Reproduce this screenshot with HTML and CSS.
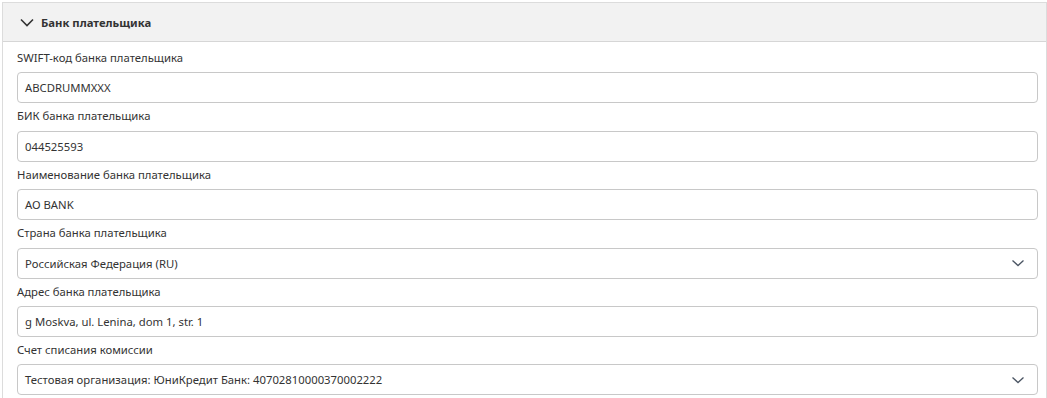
FILE: index.html
```
<!DOCTYPE html>
<html>
  <head>
    <meta charset="utf-8">
    <link rel="stylesheet" href="styles.css">
  </head>
  <body>
    <div class="panel">
      <div class="panel-head">
        <svg class="head-arrow" width="14" height="14" viewBox="0 0 14 14">
          <path d="M1 4.5 L7 10.5 L13 4.5" fill="none" stroke="#333" stroke-width="1.6"/>
        </svg>
        <span class="panel-title">Банк плательщика</span>
      </div>
      <div class="panel-body">
        <div class="field">
          <div class="field-label">SWIFT-код банка плательщика</div>
          <div class="control">ABCDRUMMXXX</div>
        </div>
        <div class="field">
          <div class="field-label">БИК банка плательщика</div>
          <div class="control">044525593</div>
        </div>
        <div class="field">
          <div class="field-label">Наименование банка плательщика</div>
          <div class="control">АО BANK</div>
        </div>
        <div class="field">
          <div class="field-label">Страна банка плательщика</div>
          <div class="control select">
            <span>Российская Федерация (RU)</span>
            <svg class="select-arrow" width="14" height="10" viewBox="0 0 14 10">
              <path d="M1.5 2.5 L7 7.5 L12.5 2.5" fill="none" stroke="#4b5563" stroke-width="1.3"/>
            </svg>
          </div>
        </div>
        <div class="field">
          <div class="field-label">Адрес банка плательщика</div>
          <div class="control">g Moskva, ul. Lenina, dom 1, str. 1</div>
        </div>
        <div class="field">
          <div class="field-label">Счет списания комиссии</div>
          <div class="control select">
            <span>Тестовая организация: ЮниКредит Банк: 40702810000370002222</span>
            <svg class="select-arrow" width="14" height="10" viewBox="0 0 14 10">
              <path d="M1.5 2.5 L7 7.5 L12.5 2.5" fill="none" stroke="#4b5563" stroke-width="1.3"/>
            </svg>
          </div>
        </div>
      </div>
    </div>
  </body>
</html>
```
FILE: styles.css
```
body {
  margin: 2px 0 0 2px;
  font-family: "Noto Sans", "Open Sans", sans-serif;
  font-size: 11.3px;
  color: #333;
  background: #fff;
}

.panel {
  border: 1px solid #dcdcdc;
  border-bottom: none;
  height: 420px;
}

.panel-head {
  display: flex;
  align-items: center;
  height: 38px;
  background-color: #f2f2f2;
  border-bottom: 1px solid #d6d6d6;
  padding-left: 17px;
}

.head-arrow {
  margin-right: 7px;
}

.panel-title {
  font-weight: bold;
  color: #333;
}

.panel-body {
  padding: 3px 8px 0 14px;
}

.field-label {
  padding: 5px 0 6.4px 0;
  line-height: 16px;
}

.control {
  display: flex;
  align-items: center;
  justify-content: space-between;
  height: 29px;
  border: 1px solid #c8c8c8;
  border-radius: 4px;
  padding: 0 12px 0 7px;
}

.select-arrow {
  display: block;
}
```
